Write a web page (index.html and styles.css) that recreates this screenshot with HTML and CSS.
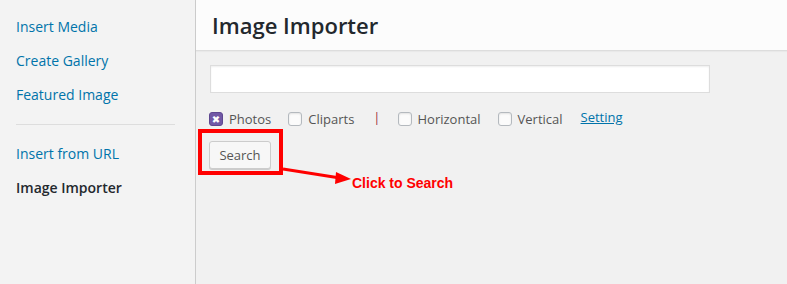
FILE: index.html
```html
<!DOCTYPE html>
<html lang="en">
<head>
  <meta charset="UTF-8">
  <meta name="viewport" content="width=device-width, initial-scale=1.0">
  <title>Image Importer</title>
  <link rel="stylesheet" href="styles.css">
</head>
<body>
  <div class="frame">
    <div class="media-menu">
      <a href="#" class="menu-item">Insert Media</a>
      <a href="#" class="menu-item">Create Gallery</a>
      <a href="#" class="menu-item">Featured Image</a>
      <div class="separator"></div>
      <a href="#" class="menu-item">Insert from URL</a>
      <a href="#" class="menu-item active">Image Importer</a>
    </div>

    <div class="media-main">
      <div class="media-title">
        <h1>Image Importer</h1>
      </div>
      <div class="media-content">
        <input type="text" class="search-input">
        <div class="filter-row">
          <label class="check"><span class="box checked">&#x2716;</span>Photos</label>
          <label class="check"><span class="box"></span>Cliparts</label>
          <span class="pipe">|</span>
          <label class="check"><span class="box"></span>Horizontal</label>
          <label class="check"><span class="box"></span>Vertical</label>
          <a href="#" class="setting">Setting</a>
        </div>
        <button type="button" class="search-btn">Search</button>
      </div>
    </div>
  </div>

  <!-- annotation overlay -->
  <div class="callout-box"></div>
  <svg class="callout-arrow" width="787" height="284" viewBox="0 0 787 284">
    <line x1="283" y1="169" x2="340" y2="178" stroke="#ff0000" stroke-width="3"/>
    <polygon points="336,172 351,179 335,184" fill="#ff0000"/>
  </svg>
  <div class="callout-text">Click to Search</div>
</body>
</html>
```

FILE: styles.css
```css
body {
  margin: 0;
  padding: 0;
  font-family: 'Open Sans', 'Noto Sans', sans-serif;
  background-color: #f1f1f1;
  width: 787px;
  height: 284px;
  overflow: hidden;
  position: relative;
}

.frame {
  display: flex;
  height: 284px;
}

.media-menu {
  width: 195px;
  flex-shrink: 0;
  background-color: #f3f3f3;
  border-right: 1px solid #cccccc;
  padding-top: 10px;
  box-sizing: content-box;
  display: flex;
  flex-direction: column;
}

.menu-item {
  display: block;
  padding: 8px 16px;
  font-size: 14px;
  line-height: 18px;
  color: #0073aa;
  text-decoration: none;
}

.menu-item.active {
  color: #23282d;
  font-weight: 600;
}

.separator {
  height: 0;
  margin: 12px 20px 12px 16px;
  border-top: 1px solid #dddddd;
}

.media-main {
  flex: 1;
  display: flex;
  flex-direction: column;
}

.media-title {
  height: 50px;
  background-color: #fcfcfc;
  border-bottom: 1px solid #dddddd;
  box-shadow: 0 1px 1px rgba(0, 0, 0, 0.03);
  padding-left: 16px;
}

.media-title h1 {
  margin: 0;
  font-size: 22px;
  font-weight: 600;
  line-height: 50px;
  color: #23282d;
}

.media-content {
  padding: 14px 14px 0;
  display: flex;
  flex-direction: column;
  align-items: flex-start;
}

.search-input {
  width: 500px;
  height: 28px;
  margin: 0;
  box-sizing: border-box;
  border: 1px solid #dddddd;
  background-color: #ffffff;
  box-shadow: inset 0 1px 2px rgba(0, 0, 0, 0.07);
}

.filter-row {
  display: flex;
  align-items: center;
  height: 20px;
  margin-top: 16px;
  font-size: 13px;
  color: #555555;
}

.check {
  display: flex;
  align-items: center;
  margin-right: 18px;
  margin-left: -1px;
}

.box {
  width: 14px;
  height: 14px;
  box-sizing: border-box;
  border: 1px solid #b4b9be;
  border-radius: 3px;
  background-color: #fbfbfb;
  box-shadow: inset 0 1px 2px rgba(0, 0, 0, 0.1);
  margin-right: 6px;
  display: flex;
  align-items: center;
  justify-content: center;
  font-size: 10px;
  color: #ffffff;
  font-family: 'DejaVu Sans', sans-serif;
}

.box.checked {
  background-color: #7158a6;
  border-color: #5e4790;
  box-shadow: none;
}

.pipe {
  color: #a0323c;
  margin: 0 18px 0 1px;
  position: relative;
  top: -2px;
}

.setting {
  color: #0073aa;
  text-decoration: underline;
  position: relative;
  top: -2px;
}

.search-btn {
  margin-top: 12px;
  margin-left: -1px;
  height: 28px;
  width: 62px;
  padding: 0;
  font-family: 'Open Sans', 'Noto Sans', sans-serif;
  font-size: 13px;
  color: #555555;
  background-color: #f7f7f7;
  border: 1px solid #cccccc;
  border-radius: 3px;
  box-shadow: 0 1px 0 #cccccc;
  cursor: pointer;
}

.callout-box {
  position: absolute;
  left: 198px;
  top: 129px;
  width: 85px;
  height: 46px;
  box-sizing: border-box;
  border: 4px solid #ff0000;
}

.callout-arrow {
  position: absolute;
  left: 0;
  top: 0;
}

.callout-text {
  position: absolute;
  left: 352px;
  top: 175px;
  font-family: 'Liberation Sans', Arial, sans-serif;
  font-weight: bold;
  font-size: 14px;
  color: #ff0000;
}
```
